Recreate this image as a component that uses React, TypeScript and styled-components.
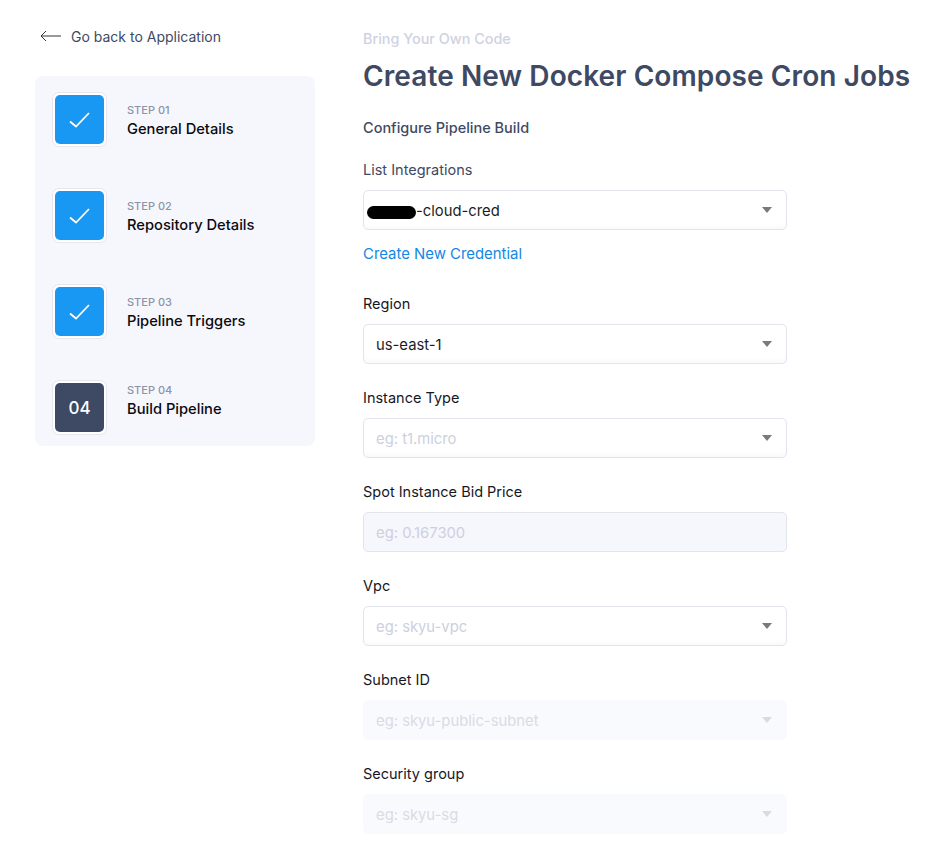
import React from "react";
import styled, { createGlobalStyle } from "styled-components";

const GlobalStyle = createGlobalStyle`
    html, body {
        margin: 0;
        padding: 0;
        background: #ffffff;
        font-family: Inter, "Open Sans", sans-serif;
    }
`;

const Page = styled.div`
    width: 936px;
    height: 860px;
    overflow: hidden;
    display: flex;
    align-items: flex-start;
    gap: 48px;
    padding-left: 35px;
    box-sizing: border-box;
`;

const Sidebar = styled.aside`
    width: 280px;
    flex-shrink: 0;
`;

const BackLink = styled.a`
    display: flex;
    align-items: center;
    gap: 10px;
    height: 72px;
    margin-bottom: 4px;
    padding-left: 5px;
    box-sizing: border-box;
    color: #3e4963;
    font-size: 14px;
    font-weight: 400;
    text-decoration: none;
`;

const StepPanel = styled.ol`
    list-style: none;
    margin: 0;
    padding: 16px 16px 11px 17px;
    display: flex;
    flex-direction: column;
    gap: 41px;
    background: #f6f7fd;
    border-radius: 8px;
`;

const StepRow = styled.li`
    display: flex;
    align-items: center;
    gap: 20px;
`;

const StepBadge = styled.div<{ $done: boolean }>`
    width: 55px;
    height: 55px;
    box-sizing: border-box;
    padding: 2px;
    background: #ffffff;
    border: 1px solid #e4e6f0;
    border-radius: 7px;

    & > span {
        width: 100%;
        height: 100%;
        display: flex;
        align-items: center;
        justify-content: center;
        border-radius: 5px;
        background: ${props => (props.$done ? "#1998f3" : "#3e4963")};
        color: #ffffff;
        font-size: 17px;
        font-weight: 500;
    }
`;

const StepText = styled.div<{ $raised: boolean }>`
    display: flex;
    flex-direction: column;
    gap: 1px;
    margin-top: 2px;
    margin-bottom: ${props => (props.$raised ? "16px" : "0")};
`;

const StepNumber = styled.span`
    color: #8d93a8;
    font-size: 11px;
    line-height: 16px;
    font-weight: 500;
`;

const StepTitle = styled.span`
    color: #0a0a0f;
    font-size: 14.7px;
    line-height: 20px;
    font-weight: 500;
`;

const Main = styled.main`
    width: 560px;
    flex-shrink: 0;
    padding-top: 30px;
`;

const Breadcrumb = styled.div`
    color: #cfd2e1;
    font-size: 14.4px;
    line-height: 18px;
    font-weight: 500;
`;

const Title = styled.h1`
    margin: 8px 0 0;
    color: #3e4963;
    font-size: 28px;
    line-height: 40px;
    font-weight: 600;
    letter-spacing: 0.1px;
    white-space: nowrap;
`;

const SectionTitle = styled.h2`
    margin: 22px 0 0;
    color: #3e4963;
    font-size: 14.5px;
    line-height: 20px;
    font-weight: 500;
`;

const FieldList = styled.div`
    width: 424px;
    margin-top: 22px;
    display: flex;
    flex-direction: column;
    gap: 24px;
`;

const Label = styled.label<{ $muted?: boolean }>`
    display: block;
    height: 20px;
    margin-bottom: 10px;
    color: ${props => (props.$muted ? "#3e4963" : "#16181f")};
    font-size: 14.5px;
    line-height: 20px;
    font-weight: 400;
`;

const Control = styled.div<{ $variant: "select" | "input" | "disabled" }>`
    height: 40px;
    box-sizing: border-box;
    display: flex;
    align-items: center;
    justify-content: space-between;
    padding: 0 12px;
    border-radius: 5px;
    border: 1px solid ${props => (props.$variant === "disabled" ? "#f9fafe" : "#e2e4ee")};
    background: ${props => (props.$variant === "select" ? "#ffffff" : props.$variant === "input" ? "#f6f7fd" : "#f9fafe")};
    box-shadow: ${props => (props.$variant === "select" ? "inset 0 -6px 8px -6px #f3f4f8" : "none")};
`;

const Value = styled.span<{ $placeholder?: "normal" | "faint" }>`
    display: flex;
    align-items: center;
    padding-top: 2px;
    color: ${props => (props.$placeholder === "normal" ? "#cdd0de" : props.$placeholder === "faint" ? "#d9dbe5" : "#1b1d24")};
    font-size: 14.8px;
    font-weight: 400;
`;

const Redaction = styled.span`
    width: 49px;
    height: 13px;
    margin: 3px 0 0 -9px;
    background: #000000;
    border-radius: 7px;
`;

const Caret = styled.span<{ $faint?: boolean }>`
    width: 0;
    height: 0;
    margin-right: 2px;
    border-left: 5.5px solid transparent;
    border-right: 5.5px solid transparent;
    border-top: 6px solid ${props => (props.$faint ? "#d8dae4" : "#777a80")};
`;

const CredentialLink = styled.a`
    display: block;
    margin: 14px 0 6px;
    height: 20px;
    color: #1388e2;
    font-size: 14.9px;
    line-height: 20px;
    text-decoration: none;
`;

const steps = [
    { number: "STEP 01", title: "General Details", done: true },
    { number: "STEP 02", title: "Repository Details", done: true },
    { number: "STEP 03", title: "Pipeline Triggers", done: true },
    { number: "STEP 04", title: "Build Pipeline", done: false },
];

const fields: { label: string; placeholder: string; variant: "select" | "input" | "disabled" }[] = [
    { label: "Instance Type", placeholder: "eg: t1.micro", variant: "select" },
    { label: "Spot Instance Bid Price", placeholder: "eg: 0.167300", variant: "input" },
    { label: "Vpc", placeholder: "eg: skyu-vpc", variant: "select" },
    { label: "Subnet ID", placeholder: "eg: skyu-public-subnet", variant: "disabled" },
    { label: "Security group", placeholder: "eg: skyu-sg", variant: "disabled" },
];

export default function App() {
    return (
        <>
            <GlobalStyle />
            <Page>
                <Sidebar>
                    <BackLink href="#">
                        <svg width="21" height="12" viewBox="0 0 21 12" fill="none" stroke="#33363f" strokeWidth="1">
                            <path d="M21 6H1M6 1 1 6l5 5" />
                        </svg>
                        Go back to Application
                    </BackLink>
                    <StepPanel>
                        {steps.map((step, index) => (
                            <StepRow key={step.number}>
                                <StepBadge $done={step.done}>
                                    <span>
                                        {step.done ? (
                                            <svg width="21" height="16" viewBox="0 0 21 16" fill="none" stroke="#ffffff" strokeWidth="1.8">
                                                <path d="M1 9.5 7 14.5 20 1" />
                                            </svg>
                                        ) : (
                                            `0${index + 1}`
                                        )}
                                    </span>
                                </StepBadge>
                                <StepText $raised={!step.done}>
                                    <StepNumber>{step.number}</StepNumber>
                                    <StepTitle>{step.title}</StepTitle>
                                </StepText>
                            </StepRow>
                        ))}
                    </StepPanel>
                </Sidebar>
                <Main>
                    <Breadcrumb>Bring Your Own Code</Breadcrumb>
                    <Title>Create New Docker Compose Cron Jobs</Title>
                    <SectionTitle>Configure Pipeline Build</SectionTitle>
                    <FieldList>
                        <div>
                            <Label $muted>List Integrations</Label>
                            <Control $variant="select">
                                <Value>
                                    <Redaction />
                                    -cloud-cred
                                </Value>
                                <Caret />
                            </Control>
                            <CredentialLink href="#">Create New Credential</CredentialLink>
                        </div>
                        <div>
                            <Label>Region</Label>
                            <Control $variant="select">
                                <Value>us-east-1</Value>
                                <Caret />
                            </Control>
                        </div>
                        {fields.map(field => (
                            <div key={field.label}>
                                <Label>{field.label}</Label>
                                <Control $variant={field.variant}>
                                    <Value $placeholder={field.variant === "disabled" ? "faint" : "normal"}>{field.placeholder}</Value>
                                    {field.variant !== "input" && <Caret $faint={field.variant === "disabled"} />}
                                </Control>
                            </div>
                        ))}
                    </FieldList>
                </Main>
            </Page>
        </>
    );
}
